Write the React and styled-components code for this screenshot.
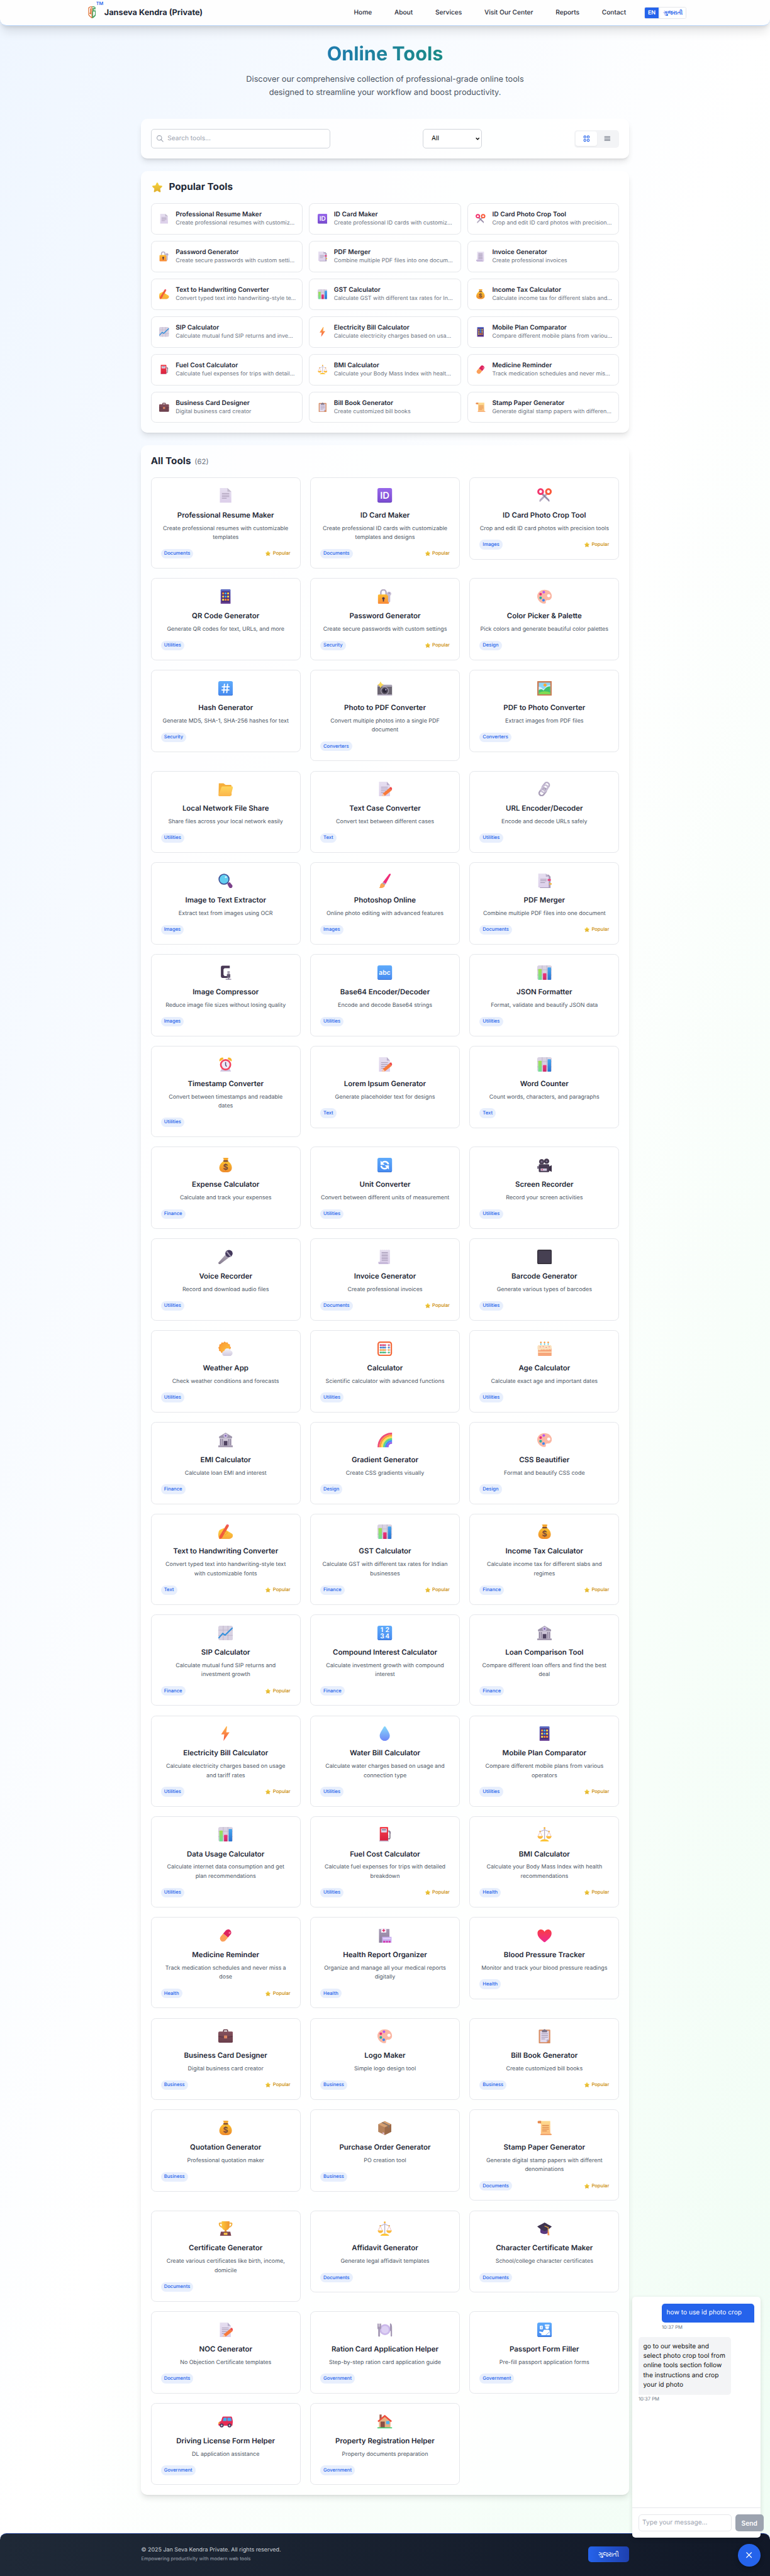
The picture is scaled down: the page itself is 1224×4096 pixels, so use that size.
import React from "react";
import styled, { createGlobalStyle } from "styled-components";

/* Design pixels expressed in rem, so the root font size scales the whole page. */
const px = (n) => `${n / 16}rem`;

const GlobalStyle = createGlobalStyle`
  html { font-size: 10.2px; }
  *, *::before, *::after { box-sizing: border-box; }
  body {
    margin: 0;
    font-family: Inter, "Noto Sans", sans-serif;
    font-size: ${px(16)};
    line-height: 1.5;
    color: #1f2937;
    background: #ffffff;
    text-rendering: geometricPrecision;
  }
  h1, h2, h3, p { margin: 0; }
`;

/* ---------- icons ---------- */

const DefsSvg = styled.svg`
  position: absolute;
  width: 0;
  height: 0;
`;

const Stops = ({ id, from, to, x2 = 0, y2 = 1 }) => (
  <linearGradient id={id} x1="0" y1="0" x2={x2} y2={y2}>
    <stop offset="0" stopColor={from} />
    <stop offset="1" stopColor={to} />
  </linearGradient>
);

const SharedDefs = () => (
  <DefsSvg aria-hidden="true">
    <defs>
      <Stops id="gPaper" from="#e6dff0" to="#dccfea" />
      <Stops id="gPurple" from="#9768ea" to="#7a4ad0" />
      <Stops id="gBlue" from="#5fabfb" to="#468af0" />
      <Stops id="gLock" from="#fdbb30" to="#f98a3a" />
      <Stops id="gFolder" from="#ffd65c" to="#fbb54c" />
      <Stops id="gBag" from="#fbc22f" to="#ee8a2c" />
      <Stops id="gSun" from="#fb9a34" to="#fdc23c" x2={1} />
      <Stops id="gCloud" from="#f5f3fa" to="#cfc8dd" />
      <Stops id="gBolt" from="#ffb84a" to="#f4523f" />
      <Stops id="gDrop" from="#86d9fb" to="#6f86f6" />
      <Stops id="gFuel" from="#f5404a" to="#d8203f" />
      <Stops id="gHeart" from="#f93d43" to="#ee2a91" />
      <Stops id="gScroll" from="#fedb8f" to="#fdbd7c" />
      <Stops id="gCup" from="#fdc63a" to="#f0962f" x2={1} y2={0} />
      <Stops id="gStar" from="#f6d23c" to="#dfae2c" />
      <Stops id="gMic" from="#b3aab9" to="#857c8e" />
      <Stops id="gHand" from="#ffd43c" to="#f6a83a" />
      <Stops id="gCase" from="#84505c" to="#6a3f4c" />
      <Stops id="gPhone" from="#5b6cc2" to="#6b3f94" />
      <Stops id="gBankTone" from="#b0a8bb" to="#978ea6" />
      <Stops id="gHospital" from="#a799b4" to="#8c7d9c" />
      <Stops id="gBarG" from="#a3e04f" to="#6fe09a" />
      <Stops id="gBarR" from="#f0327a" to="#c92a66" />
      <Stops id="gBarB" from="#45a6ef" to="#2a72d0" />
    </defs>
  </DefsSvg>
);

const Tile = ({ fill }) => (
  <>
    <rect x="2" y="2" width="28" height="28" rx="3.5" fill={fill} />
    <path d="M2 26v.5A3.5 3.5 0 0 0 5.500 30h21a3.500 3.500 0 0 0 3.500-3.500V26a3 3 0 0 1-3 2.500H5A3 3 0 0 1 2 26z" fill="#1d2e80" opacity=".25" />
  </>
);

const TileText = ({ size, y = 22, x = 16, children }) => (
  <text x={x} y={y} fontSize={size} fontWeight="600" fill="#fff" textAnchor="middle" fontFamily="Inter, sans-serif">
    {children}
  </text>
);

const ChartBack = () => (
  <>
    <rect x="2" y="2" width="28" height="28" rx="3.5" fill="#d9d2e2" />
    <path d="M2 10.500h28M2 20.500h28M11.500 2v28M20.500 2v28" stroke="#bdb3c9" strokeWidth="1" />
  </>
);

const Scale = () => (
  <>
    <path d="M16 5v21" stroke="#b8adc4" strokeWidth="1.600" />
    <path d="M6 10.500c4 0 7-1 10-4 3 3 6 4 10 4" fill="none" stroke="#c2b6cf" strokeWidth="1.400" />
    <path d="M7.500 11 3.500 20M7.500 11l4 9M24.500 11l-4 9M24.500 11l4 9" stroke="#e4a9a8" strokeWidth=".9" />
    <circle cx="16" cy="4" r="1.800" fill="#f7b133" />
    <circle cx="7.500" cy="10.500" r="1.400" fill="#f7b133" />
    <circle cx="24.500" cy="10.500" r="1.400" fill="#f7b133" />
    <path d="M2.500 19.500h10.500a5.250 5 0 0 1-10.500 0zM19 19.500h10.500a5.250 5 0 0 1-10.500 0z" fill="#fbb93c" />
    <path d="M7.500 30c.5-3 4-4.500 8.500-4.500s8 1.500 8.500 4.500z" fill="#fcc436" />
  </>
);

const ICONS = {
  star: (
    <path d="M16 2.500c.9 0 1.500.5 1.900 1.400l3 6.600 7 .8c1.900.2 2.600 2 1.300 3.300l-5.200 5 1.400 7.500c.3 1.900-1.300 2.900-2.900 2L16 25.400 9.500 29c-1.600.9-3.200-.1-2.900-2L8 19.600l-5.200-5c-1.300-1.300-.6-3.100 1.300-3.300l7-.8 3-6.600c.4-.9 1-1.400 1.900-1.400z" fill="url(#gStar)" />
  ),
  page: (
    <>
      <path d="M5 2h14.500l7.500 7V30H5z" fill="url(#gPaper)" />
      <path d="M19.500 2l7.500 7h-7.500z" fill="#c3bbcd" />
      <path d="M9 12.300h14M9 15.500h14M9 18.500h14M9 21.600h9" stroke="#a093ad" strokeWidth="1.100" />
    </>
  ),
  id: (
    <>
      <Tile fill="url(#gPurple)" />
      <TileText size="18" y={22.500}>ID</TileText>
    </>
  ),
  scissors: (
    <>
      <path d="M10 14.500 25 28.500c1-2 .5-3.500-.5-4.800L13 12z" fill="#9a8eab" />
      <path d="M22 14.500 7 29c-1.500-2-.8-4 .2-5.200L19 12z" fill="#b5abc2" />
      <circle cx="8.500" cy="8.800" r="4.600" fill="none" stroke="#f2366e" strokeWidth="3.600" />
      <circle cx="23.500" cy="8.800" r="4.600" fill="none" stroke="#fa5a3c" strokeWidth="3.600" />
      <circle cx="16" cy="17.500" r="1.300" fill="#6f6380" />
    </>
  ),
  phone: (
    <>
      <rect x="6.500" y="2" width="19" height="28" rx="1.500" fill="url(#gPhone)" />
      <rect x="8" y="6" width="16" height="21" fill="#4d2f78" />
      {[8.2, 14.2, 20.2].map((y, r) =>
        [9.5, 14.3, 19.1].map((x, c) => (
          <rect key={`${r}${c}`} x={x} y={y} width="3.500" height="3.600" fill={["#fb9a3a", "#35b7fa", "#fdd34b", "#3fa4fb", "#fde04e", "#fb8f35"][(r * 2 + c) % 6]} />
        ))
      )}
    </>
  ),
  lock: (
    <>
      <path d="M8.500 14V8a5 5 0 0 1 10 0v6" fill="none" stroke="#b5abc2" strokeWidth="2.800" />
      <rect x="3" y="12" width="21" height="18" rx="2" fill="url(#gLock)" />
      <circle cx="13.500" cy="19.500" r="2.500" fill="#4a3550" />
      <rect x="12.400" y="20" width="2.200" height="5.500" fill="#4a3550" />
      <path d="M24.500 6.500a4.200 4.200 0 0 1 2 7.800v11.200l-2 2-2.200-2v-11a4.200 4.200 0 0 1 2.200-8z" fill="#c6bcd4" />
      <circle cx="24.500" cy="9.500" r="1.200" fill="#8f84a0" />
    </>
  ),
  palette: (
    <>
      <path d="M16 3C8 3 2 9 2 15.500S8 29 15 29.500c3 .2 4-1.500 3.500-3.500-.5-2 .5-3.200 3-3.200h2.500c3.500-.5 6-3.500 6-7.300C30 8.500 24 3 16 3z" fill="#fbb7a4" />
      <circle cx="24" cy="14.500" r="3" fill="#fff" />
      <circle cx="14.500" cy="7.500" r="2.500" fill="#b35af0" />
      <circle cx="8.500" cy="11.500" r="2.500" fill="#e9307c" />
      <circle cx="8.500" cy="18.500" r="2.500" fill="#2fae9b" />
      <circle cx="14" cy="23" r="2.500" fill="#3d86f2" />
    </>
  ),
  hash: (
    <>
      <Tile fill="url(#gBlue)" />
      <path d="M13.800 8l-1.500 16M19.800 8l-1.500 16M9.500 13h13.500M9 19h13.500" stroke="#fff" strokeWidth="2.200" strokeLinecap="round" />
    </>
  ),
  camera: (
    <>
      <path d="M2 11h28v17.500a1.500 1.500 0 0 1-1.500 1.500h-25A1.500 1.500 0 0 1 2 28.500z" fill="#6c6672" />
      <rect x="2" y="9" width="28" height="4" rx="1.500" fill="#aaa3b4" />
      <rect x="2" y="27.500" width="28" height="2.500" rx="1" fill="#bdb4ca" />
      <circle cx="16" cy="20.500" r="8" fill="#a39cac" />
      <circle cx="16" cy="20.500" r="6.300" fill="#4b4655" />
      <circle cx="16" cy="20.500" r="3.600" fill="#2b2637" />
      <circle cx="18" cy="18.500" r="1.300" fill="#b7a8d8" />
      <path d="M8 2.500 10 6.500l4 2.500-4 2.500L8 15.500l-2-4L2.500 9 6 6.500z" fill="#f8d75a" />
    </>
  ),
  picture: (
    <>
      <rect x="2" y="2" width="28" height="28" rx="1" fill="#cb7f58" />
      <rect x="5" y="5" width="22" height="22" fill="#8ed6fb" />
      <circle cx="17" cy="9.500" r="3" fill="#f9a838" />
      <path d="M5 13c4-1 6 3 9 5l5-5c2-3 5-3 8-3v10H5z" fill="#dcefff" />
      <path d="M5 19c4-2 6-2 9 1 3-3 5-8 13-8v15H5z" fill="#3fc06b" />
      <path d="M5 25c7-5 15-4 22-1v3H5z" fill="#80dd52" />
    </>
  ),
  folder: (
    <>
      <path d="M3 5h9l4 3h9.500a2 2 0 0 1 2 2v17a2 2 0 0 1-2 2H4.500a2 2 0 0 1-2-2z" fill="#f6ae3b" />
      <path d="M10.500 11h18a1.700 1.700 0 0 1 1.600 2.200L26 28.200a2 2 0 0 1-2 1.500H4a1.700 1.700 0 0 1-1.500-2.200L8 12.500a2.500 2.500 0 0 1 2.500-1.500z" fill="url(#gFolder)" />
    </>
  ),
  memo: (
    <>
      <path d="M5 2h15l6 6.500V30H5z" fill="url(#gPaper)" />
      <path d="M20 2l6 6.500h-6z" fill="#b9aecb" />
      <path d="M9 12.500h13M9 16h13M9 19.500h10M9 23h6" stroke="#a093ad" strokeWidth="1.100" />
      <path d="M24.500 14.500l4.500 4.500L16.500 29l-6 1 2-5.500z" fill="#f8793a" />
      <path d="M24.500 14.500l2-2a1.600 1.600 0 0 1 2.300 0l1 2.200c.5.800.4 1.600-.2 2.200L29 19z" fill="#ef4848" />
      <path d="M12.500 24.500l4 4.500-6 1z" fill="#f6d0b8" />
    </>
  ),
  link: (
    <g fill="none" strokeWidth="3">
      <rect x="14" y="2.500" width="9.500" height="16" rx="4.750" transform="rotate(38 18 10)" stroke="#b9aec8" />
      <rect x="8" y="13.500" width="9.500" height="16" rx="4.750" transform="rotate(38 13 21)" stroke="#a99eb8" />
      <rect x="11.500" y="8" width="9" height="15" rx="4.500" transform="rotate(38 16 15.500)" stroke="#c8bed5" />
    </g>
  ),
  search: (
    <>
      <path d="M20 20l4-1.500 4.500 5.500c2 3-.5 6.500-3.500 6-1.500-.3-2.500-1.500-5.500-7.500z" fill="#7b418a" />
      <circle cx="13" cy="12.800" r="9.600" fill="#62cdf0" stroke="#3f4f96" strokeWidth="2" />
      <circle cx="16.500" cy="8.800" r="2" fill="#c6f0fd" />
    </>
  ),
  brush: (
    <>
      <path d="M24.500 3c1.500-1.500 3.500-.5 2.800 1.500L18 21.500l-5.500-3z" fill="#ef2d78" />
      <path d="M12.500 18.500l5.500 3-2 2.800-5.500-3z" fill="#aaa0b8" />
      <path d="M10.500 20.500l5.500 3.500c1 4-4.500 7-11.500 5.500 2.500-1 2.300-2.600 2.800-5 .4-2 1.700-3.500 3.200-4z" fill="#fba552" />
    </>
  ),
  tabs: (
    <>
      <path d="M10 4h14l3.500 4v22H7z" fill="#a699b6" />
      <path d="M4 2h14.500l5.500 6v20.500H4z" fill="url(#gPaper)" />
      <path d="M18.500 2l5.500 6h-5.500z" fill="#b9aecb" />
      <path d="M8 13h12M8 16h12M8 19.500h9" stroke="#a093ad" strokeWidth="1.200" />
      <rect x="22" y="12.500" width="6" height="3.500" fill="#ec3f78" />
      <rect x="25" y="20.500" width="5" height="2.800" fill="#f3b53d" />
    </>
  ),
  clamp: (
    <>
      <path d="M7 5.500A3 3 0 0 1 10 2.500h14v5H14l-2 2v10.500l2 2.500h7v3.500H10a3 3 0 0 1-3-3z" fill="#483754" />
      <rect x="19.500" y="13" width="4.500" height="13" fill="#aaa2b4" />
      <rect x="18.500" y="19" width="6.500" height="6.500" fill="#655a72" />
      <rect x="16" y="27.500" width="11" height="2.300" rx="1" fill="#a9a0b6" />
      <rect x="20.500" y="25" width="2.500" height="4" fill="#8f86a0" />
    </>
  ),
  abc: (
    <>
      <Tile fill="url(#gBlue)" />
      <TileText size="12.500" y={20.500}>abc</TileText>
    </>
  ),
  bars: (
    <>
      <ChartBack />
      <rect x="4" y="9" width="6.500" height="21" rx="1" fill="url(#gBarG)" />
      <rect x="13" y="17" width="6.500" height="13" rx="1" fill="url(#gBarR)" />
      <rect x="22" y="6" width="6.500" height="24" rx="1" fill="url(#gBarB)" />
    </>
  ),
  alarm: (
    <>
      <path d="M4.500 10C3 6 6 2 11 2.500l1 3zM27.500 10C29 6 26 2 21 2.500l-1 3z" fill="#f8b62e" />
      <path d="M8 25h16l2.500 4.500h-21z" fill="#cfc3df" />
      <circle cx="16" cy="16.500" r="10.800" fill="#f4455f" />
      <circle cx="16" cy="16.500" r="7.600" fill="#efe9f7" />
      <path d="M16 11.500v5.500l2 3" fill="none" stroke="#5c4a70" strokeWidth="1.800" />
    </>
  ),
  money: (
    <>
      <path d="M12 3.500 10.500 2.500c2-.8 9-.8 11 0L20 7h-7.500z" fill="#f4a62f" />
      <path d="M12.500 8h7.500C25 11 28 16 28 21c0 6-4 9-12 9S4 27 4 21C4 16 7.500 11 12.500 8z" fill="url(#gBag)" />
      <rect x="11.500" y="6.800" width="9.500" height="2.600" rx="1.300" fill="#7a4b38" />
      <text x="16" y="25.500" fontSize="15" fontWeight="700" fill="#7a4b38" textAnchor="middle" fontFamily="Inter, sans-serif">$</text>
    </>
  ),
  refresh: (
    <>
      <Tile fill="url(#gBlue)" />
      <path d="M23 14.500a7 7 0 0 0-11.500-3.500M9 17.500A7 7 0 0 0 20.500 21" fill="none" stroke="#fff" strokeWidth="3" />
      <path d="M8 7.500v8h8zM24 24.500v-8h-8z" fill="#fff" />
    </>
  ),
  movie: (
    <>
      <circle cx="10.500" cy="9.500" r="5" fill="#4f4358" />
      <circle cx="20" cy="8.500" r="5" fill="#463b50" />
      <circle cx="10.500" cy="9.500" r="1.500" fill="#857994" />
      <circle cx="20" cy="8.500" r="1.500" fill="#857994" />
      <rect x="2" y="18" width="4" height="5" fill="#7d7289" />
      <path d="M24 19l6-3v13l-6-3z" fill="#3c3046" />
      <rect x="5" y="14.500" width="20" height="15" rx="1.800" fill="#473b52" />
      <rect x="8.500" y="22.500" width="12" height="4.500" fill="#cfc6dc" />
      <circle cx="11.500" cy="24.700" r="1.300" fill="#e8386c" />
    </>
  ),
  mic: (
    <>
      <path d="M16.500 11l6 6L6 29.500c-1.500 1-4 .2-4-2.500z" fill="url(#gMic)" />
      <circle cx="22.500" cy="9.500" r="7" fill="#43385c" />
      <path d="M17 6.500l8 9.500 2-1.300-8-10z" fill="#a79fb4" />
    </>
  ),
  receipt: (
    <>
      <path d="M6.500 3l1.800-1 1.900 1 1.900-1 1.900 1 1.900-1 1.900 1 1.900-1 1.900 1 1.900-1L26 3v26H6.500z" fill="url(#gPaper)" />
      <path d="M10 7.500h12M10 10.500h12M10 13.500h12M10 16.500h12M10 19.500h12M10 22.500h12" stroke="#9c8fad" strokeWidth="1.300" />
      <path d="M3.500 25.500h18c0 3 2 4.500 4.500 3.500-.8 1-2 1.500-3.500 1.500H7c-2.500 0-3.500-2-3.500-5z" fill="#c7b9da" />
    </>
  ),
  square: (
    <>
      <rect x="2" y="2" width="28" height="28" rx="3" fill="#37323d" />
      <rect x="4" y="4" width="24" height="23.500" rx="1.500" fill="#464052" />
    </>
  ),
  weather: (
    <>
      <path d="M14 2l2.500 2.200 3.300-.4 1.300 3 3.200 1-.1 3.400L26.500 14l-2 2.700.1 3.400-3.200 1-1.300 3-3.300-.4L14 26l-2.800-2.300-3.300.4-1.300-3-3.200-1 .1-3.400L2 14l2-2.700-.1-3.400 3.200-1 1.300-3 3.300.4z" fill="#fa9a35" />
      <circle cx="14.500" cy="14" r="9.500" fill="url(#gSun)" />
      <path d="M14 30a5 5 0 0 1-.5-9.900 6.500 6.500 0 0 1 12.300-.6A5.500 5.500 0 0 1 25 30z" fill="url(#gCloud)" />
    </>
  ),
  abacus: (
    <>
      <rect x="3.300" y="3.300" width="25.400" height="25.400" rx="4" fill="#fff" stroke="#f46a3c" strokeWidth="2.600" />
      {[["#d52f6c", 9], ["#3277c9", 13.7], ["#f39a35", 18.4], ["#2db36f", 23.1]].map(([c, y]) => (
        <g key={y} fill={c}>
          <path d={`M5 ${y}h22`} stroke="#a89fb2" strokeWidth=".7" />
          <ellipse cx="8" cy={y} rx="1.300" ry="1.900" />
          <ellipse cx="10.900" cy={y} rx="1.300" ry="1.900" />
          <ellipse cx="13.800" cy={y} rx="1.300" ry="1.900" />
          <ellipse cx="16.700" cy={y} rx="1.300" ry="1.900" />
          <ellipse cx="24" cy={y} rx="1.300" ry="1.900" />
        </g>
      ))}
    </>
  ),
  cake: (
    <>
      <path d="M9 5v6M16 5v6M23 5v6" stroke="#5fd0ee" strokeWidth="1.800" />
      <circle cx="9" cy="3.800" r="1.500" fill="#fa9433" />
      <circle cx="16" cy="3.800" r="1.500" fill="#fa9433" />
      <circle cx="23" cy="3.800" r="1.500" fill="#fa9433" />
      <rect x="3.500" y="14" width="26" height="16" rx="1" fill="#f6a57a" />
      <rect x="3.500" y="21.500" width="26" height="2" fill="#fde3bf" />
      <path d="M2.500 11.500a3 3 0 0 1 3-2.500h21a3 3 0 0 1 3 2.500V16c-1 2-3 2-4 .5-1 1.800-3.500 1.800-5 .5-1.500 1.500-4 1.500-5.500 0-1.500 1.300-4 1.300-5 0-1.500 2.500-7.500 3-7.500-1z" fill="#fbe1bd" />
      <path d="M7 12.500h1.500M13 11l1 1.500M18.500 13.500H20M24.500 11.500l1 1.500" stroke="#e8467b" strokeWidth="1.200" />
    </>
  ),
  bank: (
    <>
      <path d="M16 2l12.500 7.500v3h-25v-3z" fill="url(#gBankTone)" />
      <rect x="4.500" y="12.500" width="23" height="15" fill="#cdc5d6" />
      <path d="M6.500 14v12M10 14v12M22 14v12M25.500 14v12" stroke="#8f859e" strokeWidth="1.900" />
      <rect x="12.500" y="18" width="7" height="9" fill="#4e4260" />
      <rect x="2" y="26.500" width="28" height="3.500" fill="#a59bb1" />
      <circle cx="16" cy="8" r="3.900" fill="#cbbfe0" />
      <circle cx="16" cy="8" r="1.600" fill="#7452ae" />
    </>
  ),
  rainbow: (
    <g fill="none" strokeWidth="3.700">
      <path d="M4 30C4 15 15 3.800 30 3.800" stroke="#ef4f77" />
      <path d="M7.500 30C7.500 17 17 7.400 30 7.400" stroke="#fb9d3c" />
      <path d="M11 30c0-11 8-19 19-19" stroke="#fde05a" />
      <path d="M14.500 30c0-9 6.500-15.500 15.500-15.500" stroke="#5fd78b" />
      <path d="M18 30c0-7 5-12 12-12" stroke="#4a8df5" />
      <path d="M21.500 30c0-5 3.500-8.500 8.500-8.500" stroke="#9a63e8" />
    </g>
  ),
  writing: (
    <>
      <path d="M3 15c2-4 6-3.500 9-6l4 3 6 4 6 3.500c3 2 2.500 6-.5 8.500-2.500 2.200-7 2-14 2H4c-2.500-4-2.500-10-1-15z" fill="url(#gHand)" />
      <path d="M17.500 3l4.500 2.500L9 28l-4.500 2L4 25z" fill="#f15b3c" />
      <path d="M17.500 3c1-1.500 2-1.500 3-1 1.200.6 2.200 1.600 1.500 3.500z" fill="#ee4560" />
      <path d="M12 18c3-3 7-2 8 0l-6 5" fill="none" stroke="#ea9c30" strokeWidth="1.100" />
    </>
  ),
  trend: (
    <>
      <ChartBack />
      <path d="M2.500 26l8-9 4.500 3L29.500 6" fill="none" stroke="#3390dc" strokeWidth="2.500" />
    </>
  ),
  numbers: (
    <>
      <Tile fill="url(#gBlue)" />
      <TileText size="12.500" x={10.5} y={14.5}>1</TileText>
      <TileText size="12.500" x={21} y={14.5}>2</TileText>
      <TileText size="12.500" x={11} y={26}>3</TileText>
      <TileText size="12.500" x={21} y={26}>4</TileText>
    </>
  ),
  bolt: <path d="M17.500 2 7.500 17.500h6L12 30l11.500-16.500h-6.300l1.600-10.700c.1-.8-.8-1.400-1.300-.8z" fill="url(#gBolt)" />,
  drop: <path d="M16 2c1 0 1.500.8 2 1.600 3 5.500 7.700 11.200 7.700 16.700A9.700 9.700 0 0 1 6.300 20.300C6.300 14.800 11 9.100 14 3.600c.5-.8 1-1.600 2-1.600z" fill="url(#gDrop)" />,
  fuel: (
    <>
      <path d="M23 10l3 2.500V23a2 2 0 0 1-4 0v-6" fill="none" stroke="#5a5064" strokeWidth="1.500" />
      <path d="M23 7.500l4.500 3.500v4H25z" fill="#8c8298" />
      <rect x="6.500" y="2" width="16" height="27" rx="1.500" fill="url(#gFuel)" />
      <rect x="9" y="5" width="11" height="7.500" rx=".8" fill="#ddd4e8" />
      <path d="M10.500 7.500h8" stroke="#6b6078" strokeWidth="1.600" />
      <rect x="5.500" y="28" width="18" height="2" fill="#b9aec8" />
    </>
  ),
  scale: <Scale />,
  pill: (
    <g transform="rotate(40 16 16)">
      <path d="M10 16V8.500a6 6 0 0 1 12 0V16z" fill="#dd245f" />
      <path d="M10 16v7.500a6 6 0 0 0 12 0V16z" fill="#fba05a" />
      <ellipse cx="18.500" cy="7" rx="1.600" ry="2.200" fill="#f7759d" />
    </g>
  ),
  hospital: (
    <>
      <rect x="5" y="3.500" width="20" height="26.500" fill="url(#gHospital)" />
      <rect x="9" y="2" width="10" height="8.500" rx="1" fill="#f4eefb" />
      <path d="M14 3.500v5.500M11.200 6.200h5.600" stroke="#e02b66" strokeWidth="1.900" />
      <rect x="11" y="18.500" width="18" height="11.500" fill="#c9aef0" />
      <rect x="12.500" y="20.500" width="15" height="2.500" fill="#e4d6fb" />
      <path d="M13 26h4v4h-4zM18.500 26h3.500v4h-3.500zM23.500 26h3.500v4h-3.500z" fill="#d43cb0" />
    </>
  ),
  heart: <path d="M16 9c1.500-3 4-4.500 6.800-4.500 4 0 6.700 3 6.700 7.300C29.500 19 23 24 17.500 28.300c-1 .8-2 .8-3 0C9 24 2.500 19 2.500 11.800c0-4.300 2.700-7.300 6.700-7.300C12 4.500 14.500 6 16 9z" fill="url(#gHeart)" />,
  briefcase: (
    <>
      <path d="M12 8V5.500A1.500 1.500 0 0 1 13.500 4h5A1.500 1.500 0 0 1 20 5.500V8" fill="none" stroke="#6a3f4c" strokeWidth="2" />
      <rect x="2" y="7" width="28" height="21.500" rx="2.500" fill="url(#gCase)" />
      <path d="M2 16.500c9 2 19 2 28 0" fill="none" stroke="#532f3c" strokeWidth="1.100" />
      <rect x="13" y="14.800" width="6" height="5.500" rx=".8" fill="#dd8561" />
    </>
  ),
  clipboard: (
    <>
      <rect x="5" y="3.500" width="22" height="26.500" rx="1.500" fill="#d88d63" />
      <path d="M7.500 6h17v16.500L20 27.500H7.500z" fill="#e2daee" />
      <path d="M24.500 22.500 20 27.500V24c0-1 .5-1.500 1.500-1.500z" fill="#b6aac6" />
      <path d="M10 11.500h12.500M10 14.800h12.500M10 18h12.500M10 21.300h7" stroke="#978ba6" strokeWidth="1.100" />
      <path d="M11 4.500h3a2 2 0 0 1 4 0h3v4H11z" fill="#7e7489" />
    </>
  ),
  box: (
    <>
      <path d="M16 3l12.500 6v14.500L16 29.500 3.500 23.500V9z" fill="#b4815b" />
      <path d="M16 3l12.500 6L16 15 3.500 9z" fill="#d6a071" />
      <path d="M16 15l12.500-6v14.500L16 29.500z" fill="#9b6a49" />
      <path d="M9.500 6l12.500 6v4.500L25 15v-4.300L12.500 4.700z" fill="#8a7466" />
      <path d="M12 24l3 1.500v3L12 27z" fill="#e7c2de" />
    </>
  ),
  scroll: (
    <>
      <path d="M8 2.500h19v23l2 2H9V8L5.500 6.500z" fill="url(#gScroll)" />
      <path d="M2.500 4.500A2.600 2.600 0 0 1 5 2.300h4.500V7H3.500z" fill="#e78a4e" />
      <path d="M8 27.500h22c0 1.500-1 2.500-2.500 2.500H10c-1.300 0-2-1-2-2.500z" fill="#ee9a5e" />
      <path d="M11.500 11h13M11.500 14.500h13M11.500 18h13M11.500 21.500h9" stroke="#d4763f" strokeWidth="1.200" />
    </>
  ),
  trophy: (
    <>
      <path d="M9 5.500H5a1 1 0 0 0-1 1c0 4 2.500 6.500 7 7M23 5.500h4a1 1 0 0 1 1 1c0 4-2.500 6.500-7 7" fill="none" stroke="#f3ac35" strokeWidth="2.200" />
      <path d="M8.500 2h15v8c0 6-2.800 9-7.500 9s-7.500-3-7.500-9z" fill="url(#gCup)" />
      <path d="M14.500 18h3l.8 4.500h-4.600z" fill="#eb982f" />
      <path d="M7 22h18l1.800 8H5.200z" fill="#7c4451" />
      <rect x="12.500" y="24" width="7" height="4" fill="#fcc94a" />
    </>
  ),
  gradcap: (
    <>
      <path d="M8 14v9c3 4.500 13 4.500 16 0v-9z" fill="#5b3a80" />
      <path d="M16 4.500c4 2 9 5 14 7.500-4 4-9 7-14 9-5-2-10-5-14-9 5-2.500 10-5.500 14-7.500z" fill="#3f3450" />
      <path d="M16 11l7 3v9" fill="none" stroke="#f5b13d" strokeWidth="1.500" />
      <path d="M21.800 22h2.600l1 7h-3.600z" fill="#f79455" />
    </>
  ),
  plate: (
    <>
      <circle cx="16.500" cy="15.500" r="10.500" fill="#cbb8ea" />
      <circle cx="16.500" cy="15.500" r="7.200" fill="#ddd0f4" />
      <path d="M2 4v8c0 2 1 3 2 3v12.500a1.200 1.200 0 0 0 2.400 0V15c1.200 0 2.200-1 2.200-3V4" fill="#a497b4" stroke="#a497b4" />
      <path d="M4.200 4v6M6.300 4v6" stroke="#fff" strokeWidth=".7" />
      <path d="M27 3.500c2.500 1 3 4.500 3 8.500v15.500a1.300 1.300 0 0 1-2.600 0V18H26V5c0-1 .3-1.500 1-1.500z" fill="#a497b4" />
    </>
  ),
  passport: (
    <>
      <Tile fill="url(#gBlue)" />
      <path d="M16.500 6h9v2.500h-9zM17.500 9.500h7v1.500a3.500 3.500 0 0 1-7 0z" fill="#fff" />
      <path d="M15 16h9l2.500 2.500L18 26H10v-2.500l-4.500-2.500 1-2 6 1.500z" fill="#fff" />
      <path d="M19 26l7.500-6.500V26z" fill="#fff" />
      <rect x="7" y="8" width="5.500" height="7" rx=".8" fill="#fff" />
      <path d="M9.700 9.500v4" stroke="#4b93f3" strokeWidth="1" />
    </>
  ),
  car: (
    <>
      <path d="M9.500 9.500C10 8 11 7.500 12.500 7.500H26c1.500 0 2 .5 2.500 2L30 17l-1 8H3c-1-2-1-4-.5-5.500 1-2 3.500-3 5-3.500z" fill="#e62b55" />
      <path d="M10.500 16l1.500-5.500c.2-.7.500-1 1.200-1H18V16zM19.500 9.500h6c.7 0 1 .2 1.200.9L27.800 16h-8.300z" fill="#44a9f0" />
      <circle cx="8.500" cy="24.500" r="3.700" fill="#46365a" />
      <circle cx="23.500" cy="24.500" r="3.700" fill="#46365a" />
      <circle cx="8.500" cy="24.500" r="1.600" fill="#cdc4da" />
      <circle cx="23.500" cy="24.500" r="1.600" fill="#cdc4da" />
      <rect x="2" y="18.500" width="3" height="2.500" fill="#fbc23a" />
    </>
  ),
  house: (
    <>
      <rect x="6" y="3.500" width="4" height="9" fill="#a65b48" />
      <path d="M5 16 16 6.500 27 16v12.500H5z" fill="#e7b184" />
      <path d="M16 4 2.200 15.800l2 2.200L16 8l11.800 10 2-2.200z" fill="#ef4c3c" />
      <rect x="8" y="17" width="8" height="11.500" fill="#8a4f45" />
      <rect x="18.500" y="16" width="6.500" height="6" fill="#4fb6f2" />
      <path d="M2 28h28v2H2z" fill="#3fcf72" />
    </>
  ),
};

const IconSvg = styled.svg`
  display: block;
  flex: none;
  width: ${(p) => px(p.$size)};
  height: ${(p) => px(p.$size)};
`;

const Emoji = ({ name, size }) => (
  <IconSvg viewBox="2 2 28 28" $size={size} aria-hidden="true">
    {ICONS[name]}
  </IconSvg>
);

const LineIcon = styled.svg.attrs({ viewBox: "0 0 24 24", fill: "none", stroke: "currentColor", strokeLinecap: "round", strokeLinejoin: "round" })`
  display: block;
  flex: none;
  width: ${(p) => px(p.$size)};
  height: ${(p) => px(p.$size)};
  stroke-width: 2;
`;

/* ---------- data ---------- */

const TOOLS = [
  ["page", "Professional Resume Maker", "Create professional resumes with customizable templates", "Documents", true],
  ["id", "ID Card Maker", "Create professional ID cards with customizable templates and designs", "Documents", true],
  ["scissors", "ID Card Photo Crop Tool", "Crop and edit ID card photos with precision tools", "Images", true],
  ["phone", "QR Code Generator", "Generate QR codes for text, URLs, and more", "Utilities"],
  ["lock", "Password Generator", "Create secure passwords with custom settings", "Security", true],
  ["palette", "Color Picker & Palette", "Pick colors and generate beautiful color palettes", "Design"],
  ["hash", "Hash Generator", "Generate MD5, SHA-1, SHA-256 hashes for text", "Security"],
  ["camera", "Photo to PDF Converter", "Convert multiple photos into a single PDF document", "Converters"],
  ["picture", "PDF to Photo Converter", "Extract images from PDF files", "Converters"],
  ["folder", "Local Network File Share", "Share files across your local network easily", "Utilities"],
  ["memo", "Text Case Converter", "Convert text between different cases", "Text"],
  ["link", "URL Encoder/Decoder", "Encode and decode URLs safely", "Utilities"],
  ["search", "Image to Text Extractor", "Extract text from images using OCR", "Images"],
  ["brush", "Photoshop Online", "Online photo editing with advanced features", "Images"],
  ["tabs", "PDF Merger", "Combine multiple PDF files into one document", "Documents", true],
  ["clamp", "Image Compressor", "Reduce image file sizes without losing quality", "Images"],
  ["abc", "Base64 Encoder/Decoder", "Encode and decode Base64 strings", "Utilities"],
  ["bars", "JSON Formatter", "Format, validate and beautify JSON data", "Utilities"],
  ["alarm", "Timestamp Converter", "Convert between timestamps and readable dates", "Utilities"],
  ["memo", "Lorem Ipsum Generator", "Generate placeholder text for designs", "Text"],
  ["bars", "Word Counter", "Count words, characters, and paragraphs", "Text"],
  ["money", "Expense Calculator", "Calculate and track your expenses", "Finance"],
  ["refresh", "Unit Converter", "Convert between different units of measurement", "Utilities"],
  ["movie", "Screen Recorder", "Record your screen activities", "Utilities"],
  ["mic", "Voice Recorder", "Record and download audio files", "Utilities"],
  ["receipt", "Invoice Generator", "Create professional invoices", "Documents", true],
  ["square", "Barcode Generator", "Generate various types of barcodes", "Utilities"],
  ["weather", "Weather App", "Check weather conditions and forecasts", "Utilities"],
  ["abacus", "Calculator", "Scientific calculator with advanced functions", "Utilities"],
  ["cake", "Age Calculator", "Calculate exact age and important dates", "Utilities"],
  ["bank", "EMI Calculator", "Calculate loan EMI and interest", "Finance"],
  ["rainbow", "Gradient Generator", "Create CSS gradients visually", "Design"],
  ["palette", "CSS Beautifier", "Format and beautify CSS code", "Design"],
  ["writing", "Text to Handwriting Converter", "Convert typed text into handwriting-style text with customizable fonts", "Text", true],
  ["bars", "GST Calculator", "Calculate GST with different tax rates for Indian businesses", "Finance", true],
  ["money", "Income Tax Calculator", "Calculate income tax for different slabs and regimes", "Finance", true],
  ["trend", "SIP Calculator", "Calculate mutual fund SIP returns and investment growth", "Finance", true],
  ["numbers", "Compound Interest Calculator", "Calculate investment growth with compound interest", "Finance"],
  ["bank", "Loan Comparison Tool", "Compare different loan offers and find the best deal", "Finance"],
  ["bolt", "Electricity Bill Calculator", "Calculate electricity charges based on usage and tariff rates", "Utilities", true],
  ["drop", "Water Bill Calculator", "Calculate water charges based on usage and connection type", "Utilities"],
  ["phone", "Mobile Plan Comparator", "Compare different mobile plans from various operators", "Utilities", true],
  ["bars", "Data Usage Calculator", "Calculate internet data consumption and get plan recommendations", "Utilities"],
  ["fuel", "Fuel Cost Calculator", "Calculate fuel expenses for trips with detailed breakdown", "Utilities", true],
  ["scale", "BMI Calculator", "Calculate your Body Mass Index with health recommendations", "Health", true],
  ["pill", "Medicine Reminder", "Track medication schedules and never miss a dose", "Health", true],
  ["hospital", "Health Report Organizer", "Organize and manage all your medical reports digitally", "Health"],
  ["heart", "Blood Pressure Tracker", "Monitor and track your blood pressure readings", "Health"],
  ["briefcase", "Business Card Designer", "Digital business card creator", "Business", true],
  ["palette", "Logo Maker", "Simple logo design tool", "Business"],
  ["clipboard", "Bill Book Generator", "Create customized bill books", "Business", true],
  ["money", "Quotation Generator", "Professional quotation maker", "Business"],
  ["box", "Purchase Order Generator", "PO creation tool", "Business"],
  ["scroll", "Stamp Paper Generator", "Generate digital stamp papers with different denominations", "Documents", true],
  ["trophy", "Certificate Generator", "Create various certificates like birth, income, domicile", "Documents"],
  ["scale", "Affidavit Generator", "Generate legal affidavit templates", "Documents"],
  ["gradcap", "Character Certificate Maker", "School/college character certificates", "Documents"],
  ["memo", "NOC Generator", "No Objection Certificate templates", "Documents"],
  ["plate", "Ration Card Application Helper", "Step-by-step ration card application guide", "Government"],
  ["passport", "Passport Form Filler", "Pre-fill passport application forms", "Government"],
  ["car", "Driving License Form Helper", "DL application assistance", "Government"],
  ["house", "Property Registration Helper", "Property documents preparation", "Government"],
].map(([icon, name, desc, category, popular]) => ({ icon, name, desc, category, popular: !!popular }));

const NAV = ["Home", "About", "Services", "Visit Our Center", "Reports", "Contact"];

/* ---------- layout ---------- */

const Page = styled.div`
  position: relative;
  display: flex;
  flex-direction: column;
  min-height: 100vh;
  overflow: hidden;
  background: linear-gradient(to bottom right, #eff6ff, #ffffff, #f0fdf4);
`;

const Header = styled.header`
  position: relative;
  z-index: 1;
  display: flex;
  align-items: center;
  justify-content: space-between;
  height: ${px(65)};
  padding: 0 ${px(208)};
  background: #fefefe;
  border-bottom: 1px solid #bfdbfe;
  border-radius: 0 0 ${px(16)} ${px(16)};
  box-shadow: 0 ${px(20)} ${px(25)} ${px(-5)} rgba(0, 0, 0, 0.1), 0 ${px(8)} ${px(10)} ${px(-6)} rgba(0, 0, 0, 0.1);
`;

const Brand = styled.div`
  display: flex;
  align-items: center;
  gap: ${px(8)};
  font-size: ${px(20)};
  font-weight: 700;
  color: #1f2937;
`;

const LogoBox = styled.div`
  position: relative;
  display: flex;
  align-items: center;
  justify-content: center;
  width: ${px(44)};
  height: ${px(48)};
  padding: 0 ${px(2)} ${px(2)} 0;
`;

const LogoSvg = styled.svg`
  width: ${px(20)};
  height: ${px(30)};
`;

const TradeMark = styled.span`
  position: absolute;
  top: ${px(-6)};
  left: ${px(31.5)};
  font-size: ${px(11.5)};
  line-height: ${px(16)};
  font-weight: 600;
  color: #2563eb;
`;

const HeaderRight = styled.div`
  display: flex;
  align-items: center;
  gap: ${px(45)};
`;

const Nav = styled.nav`
  display: flex;
  gap: ${px(56)};
  font-size: ${px(16)};
  font-weight: 500;
  color: #1f2937;
`;

const LanguageSwitch = styled.div`
  display: flex;
  height: ${px(30)};
  width: ${px(106)};
  background: #fff;
  border: 1px solid #e5e7eb;
  border-radius: ${px(4)};
  overflow: hidden;
`;

const Language = styled.span`
  display: flex;
  align-items: center;
  justify-content: center;
  width: ${(p) => (p.$active ? px(35) : "auto")};
  flex: ${(p) => (p.$active ? "none" : 1)};
  margin-left: ${(p) => (p.$active ? 0 : px(2))};
  border-left: ${(p) => (p.$active ? "none" : "1px solid #e5e7eb")};
  font-size: ${px(14)};
  font-weight: 600;
  color: ${(p) => (p.$active ? "#fff" : "#2563eb")};
  background: ${(p) => (p.$active ? "#2563eb" : "#fff")};
`;

const Main = styled.main`
  display: flex;
  flex-direction: column;
  width: ${px(1216)};
  margin: 0 auto;
  padding: ${px(47)} 0 ${px(96)};
`;

const Hero = styled.section`
  text-align: center;
  margin-bottom: ${px(48)};
`;

const HeroTitle = styled.h1`
  font-size: ${px(48)};
  line-height: ${px(48)};
  font-weight: 700;
  margin-bottom: ${px(24)};
  color: transparent;
  background: linear-gradient(to right, #2563eb, #16a34a);
  background-clip: text;
  -webkit-background-clip: text;
`;

const HeroText = styled.p`
  max-width: ${px(768)};
  margin: 0 auto;
  font-size: ${px(20)};
  line-height: ${px(32.5)};
  color: #4b5563;
`;

const Panel = styled.section`
  padding: ${px(24)};
  margin-bottom: ${(p) => (p.$last ? 0 : px(32))};
  background: rgba(255, 255, 255, 0.8);
  border-radius: ${px(16)};
  box-shadow: 0 ${px(10)} ${px(15)} ${px(-3)} rgba(0, 0, 0, 0.1), 0 ${px(4)} ${px(6)} ${px(-4)} rgba(0, 0, 0, 0.1);
`;

const Controls = styled(Panel)`
  display: flex;
  align-items: center;
  justify-content: space-between;
`;

const SearchBox = styled.div`
  display: flex;
  align-items: center;
  gap: ${px(9)};
  width: ${px(448)};
  height: ${px(50)};
  padding: 0 ${px(11)};
  background: #fff;
  border: 1px solid #d1d5db;
  border-radius: ${px(8)};
  color: #9ca3af;
`;

const SelectBox = styled.div`
  display: flex;
  align-items: center;
  justify-content: space-between;
  width: ${px(147)};
  height: ${px(48)};
  padding: 0 ${px(4)} 0 ${px(20)};
  background: #fff;
  border: 1px solid #d1d5db;
  border-radius: ${px(8)};
  color: #000;
`;

const Chevron = styled.svg`
  width: ${px(10)};
  height: ${px(8)};
`;

const ViewToggle = styled.div`
  display: flex;
  padding: ${px(4)};
  background: #f3f4f6;
  border-radius: ${px(8)};
`;

const ViewButton = styled.button`
  display: flex;
  align-items: center;
  justify-content: center;
  width: ${px(52)};
  height: ${px(36)};
  padding: 0;
  border: 0;
  border-radius: ${px(6)};
  color: ${(p) => (p.$active ? "#2563eb" : "#6b7280")};
  background: ${(p) => (p.$active ? "#fff" : "transparent")};
  box-shadow: ${(p) => (p.$active ? "0 1px 2px rgba(0,0,0,.06)" : "none")};
`;

const SectionTitle = styled.h2`
  display: flex;
  align-items: baseline;
  height: ${px(32)};
  margin-bottom: ${px(24)};
  font-size: ${px(24)};
  line-height: ${px(32)};
  font-weight: 700;
  color: #1f2937;
`;

const Count = styled.span`
  margin-left: ${px(9)};
  font-size: ${px(18)};
  line-height: ${px(28)};
  font-weight: 400;
  color: #6b7280;
`;

const IconSlot = styled.span`
  display: flex;
  flex: none;
  align-self: center;
  justify-content: center;
  width: ${px(33)};
  margin-right: ${px(12)};
`;

const PopularGrid = styled.div`
  display: grid;
  grid-template-columns: repeat(3, minmax(0, 1fr));
  gap: ${px(16)};
`;

const PopularCard = styled.article`
  display: flex;
  align-items: center;
  height: ${px(78)};
  padding: 0 calc(${px(17)} - 1px);
  background: #fff;
  border: 1px solid #e5e7eb;
  border-radius: ${px(12)};
`;

const PopularText = styled.div`
  flex: 1;
  min-width: 0;
`;

const PopularName = styled.h3`
  font-size: ${px(16)};
  line-height: ${px(24)};
  font-weight: 600;
  color: #1f2937;
`;

const PopularDesc = styled.p`
  overflow: hidden;
  text-overflow: ellipsis;
  white-space: nowrap;
  font-size: ${px(14)};
  line-height: ${px(20)};
  color: #6b7280;
`;

const ToolGrid = styled.div`
  display: grid;
  grid-template-columns: repeat(3, minmax(0, 1fr));
  align-items: start;
  gap: ${px(24.1)} ${px(24)};
`;

const ToolCard = styled.article`
  display: flex;
  flex-direction: column;
  align-items: center;
  padding: calc(${px(25)} - 1px);
  background: #fff;
  border: 1px solid #e5e7eb;
  border-radius: ${px(12)};
`;

const ToolIcon = styled.div`
  display: flex;
  align-items: center;
  height: ${px(41)};
  margin-bottom: ${px(15)};
`;

const ToolName = styled.h3`
  margin-bottom: ${px(8)};
  font-size: ${px(18)};
  line-height: ${px(28)};
  font-weight: 600;
  color: #1f2937;
`;

const ToolDesc = styled.p`
  margin-bottom: ${px(16)};
  text-align: center;
  font-size: ${px(14)};
  line-height: ${px(22.75)};
  color: #4b5563;
`;

const ToolMeta = styled.div`
  display: flex;
  align-items: center;
  justify-content: space-between;
  width: 100%;
  height: ${px(24)};
  font-size: ${px(12)};
  line-height: ${px(16)};
  font-weight: 500;
`;

const Tag = styled.span`
  padding: ${px(4)} ${px(8)};
  color: #2563eb;
  background: #e8effd;
  border-radius: ${px(12)};
`;

const PopularMark = styled.span`
  display: flex;
  align-items: center;
  gap: ${px(5.5)};
  color: #ca8a04;
`;

const Footer = styled.footer`
  flex: 1;
  min-height: ${px(105)};
  padding-top: calc(${px(33)} - 1px);
  background: linear-gradient(to right, #1f2937, #111827);
  border-top: 1px solid #1e3a8a;
  border-radius: ${px(16)} ${px(16)} 0 0;
`;

const FooterInner = styled.div`
  display: flex;
  align-items: center;
  justify-content: space-between;
  width: ${px(1216)};
  height: ${px(40)};
  margin: 0 auto;
`;

const Copyright = styled.p`
  font-size: ${px(14)};
  line-height: ${px(20)};
  color: #d1d5db;
`;

const Tagline = styled.p`
  margin-top: ${px(4)};
  font-size: ${px(12)};
  line-height: ${px(16)};
  color: #9ca3af;
`;

const FooterLanguage = styled.button`
  width: ${px(101)};
  height: ${px(40)};
  padding: 0;
  border: 0;
  border-radius: ${px(8)};
  font: 500 ${px(16)} Inter, "Noto Sans", sans-serif;
  color: #fff;
  background: linear-gradient(to right, #2563eb, #1e40af);
`;

const ChatPanel = styled.aside`
  position: absolute;
  right: ${px(24)};
  bottom: ${px(96)};
  display: flex;
  flex-direction: column;
  width: ${px(320)};
  height: ${px(600)};
  background: #fff;
  border-radius: ${px(8)};
  box-shadow: 0 ${px(4)} ${px(12)} rgba(0, 0, 0, 0.12);
`;

const ChatLog = styled.div`
  display: flex;
  flex: 1;
  flex-direction: column;
  padding: ${px(16)};
`;

const Message = styled.div`
  width: ${px(230)};
  margin-bottom: ${px(16)};
  align-self: ${(p) => (p.$mine ? "flex-end" : "flex-start")};
`;

const Bubble = styled.div`
  padding: ${px(12)};
  font-size: ${px(16)};
  line-height: ${px(24)};
  color: ${(p) => (p.$mine ? "#fff" : "#111")};
  background: ${(p) => (p.$mine ? "#2563eb" : "#f3f4f6")};
  border-radius: ${(p) => (p.$mine ? `${px(8)} ${px(8)} 0 ${px(8)}` : `${px(8)} ${px(8)} ${px(8)} 0`)};
`;

const Time = styled.div`
  margin-top: ${px(4)};
  font-size: ${px(12)};
  line-height: ${px(16)};
  color: #6b7280;
`;

const ChatForm = styled.div`
  display: flex;
  gap: ${px(8)};
  height: ${px(75)};
  padding: ${px(16)} 0 ${px(16)} ${px(16)};
  border-top: 1px solid #e5e7eb;
`;

const ChatInput = styled.div`
  flex: none;
  display: flex;
  align-items: center;
  width: ${px(233)};
  height: ${px(42)};
  padding: 0 ${px(8)};
  color: #9ca3af;
  border: 1px solid #e5e7eb;
  border-radius: ${px(8)};
`;

const SendButton = styled.button`
  flex: none;
  width: ${px(71)};
  height: ${px(42)};
  padding: 0;
  border: 0;
  border-radius: ${px(8)};
  font: 600 ${px(16)} Inter, sans-serif;
  color: #fff;
  background: #9ca3af;
`;

const ChatClose = styled.button`
  position: absolute;
  right: ${px(24)};
  bottom: ${px(24)};
  display: flex;
  align-items: center;
  justify-content: center;
  width: ${px(56)};
  height: ${px(56)};
  padding: 0;
  border: 0;
  border-radius: 50%;
  color: #fff;
  background: #2563eb;
  box-shadow: 0 ${px(4)} ${px(12)} rgba(0, 0, 0, 0.25);
`;

/* ---------- parts ---------- */

const Logo = () => (
  <LogoBox>
    <LogoSvg viewBox="0 0 20 30" fill="none">
      <path d="M9.500 1C6.500 1 3 2.500 1.500 4v17c1.500 3 5 6 8 8z" stroke="#e0783c" strokeWidth="2" />
      <path d="M6.500 5v13.500L3.500 17" stroke="#e0783c" strokeWidth="2.600" />
      <path d="M10.500 1c3 0 6.500 1.500 8 3" stroke="#3fa05a" strokeWidth="2.200" />
      <path d="M10.500 29c3-2 6.500-5 8-8v-9.500h-6V6h6" stroke="#3fa05a" strokeWidth="2.600" />
      <path d="M11.500 12v16" stroke="#3fa05a" strokeWidth="2.200" />
    </LogoSvg>
    <TradeMark>TM</TradeMark>
  </LogoBox>
);

const PopularItem = ({ tool }) => (
  <PopularCard>
    <IconSlot>
      <Emoji name={tool.icon} size={24.5} />
    </IconSlot>
    <PopularText>
      <PopularName>{tool.name}</PopularName>
      <PopularDesc>{tool.desc}</PopularDesc>
    </PopularText>
  </PopularCard>
);

const ToolItem = ({ tool }) => (
  <ToolCard>
    <ToolIcon>
      <Emoji name={tool.icon} size={36.4} />
    </ToolIcon>
    <ToolName>{tool.name}</ToolName>
    <ToolDesc>{tool.desc}</ToolDesc>
    <ToolMeta>
      <Tag>{tool.category}</Tag>
      {tool.popular && (
        <PopularMark>
          <Emoji name="star" size={12.5} />
          Popular
        </PopularMark>
      )}
    </ToolMeta>
  </ToolCard>
);

export default function App() {
  return (
    <>
      <GlobalStyle />
      <SharedDefs />
      <Page>
        <Header>
          <Brand>
            <Logo />
            Janseva Kendra (Private)
          </Brand>
          <HeaderRight>
            <Nav>
              {NAV.map((item) => (
                <span key={item}>{item}</span>
              ))}
            </Nav>
            <LanguageSwitch>
              <Language $active>EN</Language>
              <Language>ગુજરાતી</Language>
            </LanguageSwitch>
          </HeaderRight>
        </Header>

        <Main>
          <Hero>
            <HeroTitle>Online Tools</HeroTitle>
            <HeroText>
              Discover our comprehensive collection of professional-grade online tools designed to streamline your workflow and boost productivity.
            </HeroText>
          </Hero>

          <Controls>
            <SearchBox>
              <LineIcon $size={20}>
                <path d="M21 21l-6-6m2-5a7 7 0 11-14 0 7 7 0 0114 0z" />
              </LineIcon>
              Search tools...
            </SearchBox>
            <SelectBox>
              All
              <Chevron viewBox="0 0 10 8" fill="none" stroke="#000" strokeWidth="2">
                <path d="M1 2l4 4 4-4" />
              </Chevron>
            </SelectBox>
            <ViewToggle>
              <ViewButton $active aria-label="Grid view">
                <LineIcon $size={20}>
                  <path d="M4 6a2 2 0 012-2h2a2 2 0 012 2v2a2 2 0 01-2 2H6a2 2 0 01-2-2V6zM14 6a2 2 0 012-2h2a2 2 0 012 2v2a2 2 0 01-2 2h-2a2 2 0 01-2-2V6zM4 16a2 2 0 012-2h2a2 2 0 012 2v2a2 2 0 01-2 2H6a2 2 0 01-2-2v-2zM14 16a2 2 0 012-2h2a2 2 0 012 2v2a2 2 0 01-2 2h-2a2 2 0 01-2-2v-2z" />
                </LineIcon>
              </ViewButton>
              <ViewButton aria-label="List view">
                <LineIcon $size={20}>
                  <path d="M4 6h16M4 10h16M4 14h16M4 18h16" />
                </LineIcon>
              </ViewButton>
            </ViewToggle>
          </Controls>

          <Panel>
            <SectionTitle>
              <IconSlot>
                <Emoji name="star" size={25} />
              </IconSlot>
              Popular Tools
            </SectionTitle>
            <PopularGrid>
              {TOOLS.filter((t) => t.popular).map((t) => (
                <PopularItem key={t.name} tool={t} />
              ))}
            </PopularGrid>
          </Panel>

          <Panel $last>
            <SectionTitle>
              All Tools
              <Count>({TOOLS.length})</Count>
            </SectionTitle>
            <ToolGrid>
              {TOOLS.map((t) => (
                <ToolItem key={t.name} tool={t} />
              ))}
            </ToolGrid>
          </Panel>
        </Main>

        <Footer>
          <FooterInner>
            <div>
              <Copyright>© 2025 Jan Seva Kendra Private. All rights reserved.</Copyright>
              <Tagline>Empowering productivity with modern web tools</Tagline>
            </div>
            <FooterLanguage>ગુજરાતી</FooterLanguage>
          </FooterInner>
        </Footer>

        <ChatPanel>
          <ChatLog>
            <Message $mine>
              <Bubble $mine>how to use id photo crop</Bubble>
              <Time>10:37 PM</Time>
            </Message>
            <Message>
              <Bubble>go to our website and select photo crop tool from online tools section follow the instructions and crop your id photo</Bubble>
              <Time>10:37 PM</Time>
            </Message>
          </ChatLog>
          <ChatForm>
            <ChatInput>Type your message...</ChatInput>
            <SendButton>Send</SendButton>
          </ChatForm>
        </ChatPanel>
        <ChatClose aria-label="Close chat">
          <LineIcon $size={24}>
            <path d="M18 6 6 18M6 6l12 12" />
          </LineIcon>
        </ChatClose>
      </Page>
    </>
  );
}
